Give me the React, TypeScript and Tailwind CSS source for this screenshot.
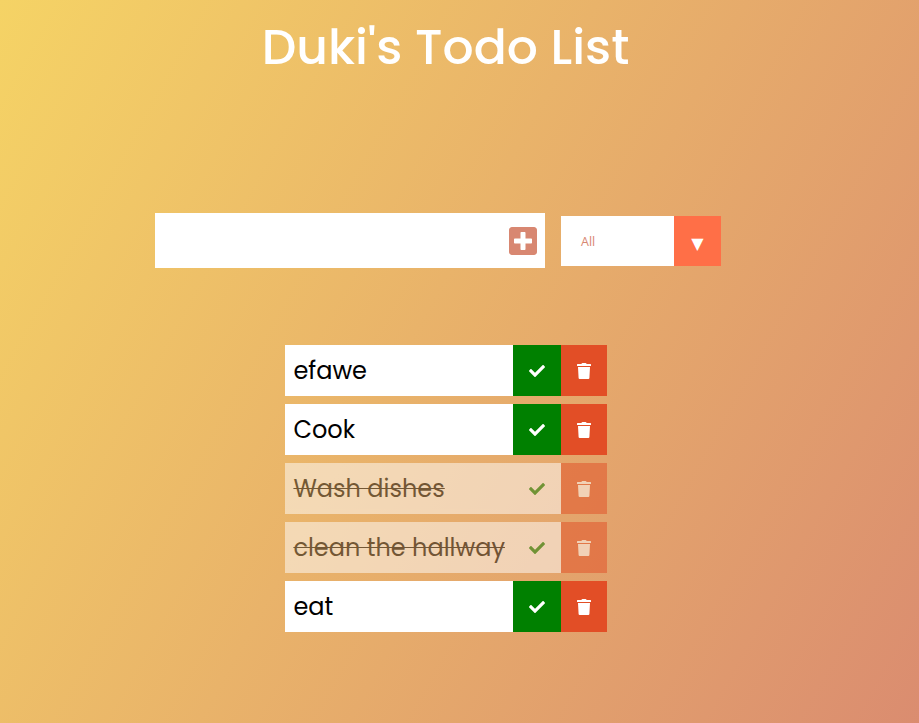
import React from "react";
import { FaCheck, FaPlusSquare } from "react-icons/fa";

type Todo = { text: string; done: boolean };

const todos: Todo[] = [
  { text: "efawe", done: false },
  { text: "Cook", done: false },
  { text: "Wash dishes", done: true },
  { text: "clean the hallway", done: true },
  { text: "eat", done: false },
];

function TrashIcon() {
  return (
    <svg viewBox="0 0 14 16" className="h-4 w-[14px]" fill="currentColor" aria-hidden="true">
      <path d="M.4 1h3.8l.5-.6Q5 0 5.4 0h3.2q.4 0 .7.4l.5.6h3.8q.4 0 .4.4V3H0V1.400q0-.4.4-.4zM1 4h12l-.6 11q-.1 1-1 1H2.600q-.9 0-1-1z" />
    </svg>
  );
}

function TodoItem({ todo }: { todo: Todo }) {
  return (
    <li className={`flex h-[51px] bg-white text-[24px] text-black ${todo.done ? "opacity-50" : ""}`}>
      <span className={`flex-1 pl-[8.4px] leading-[51px] ${todo.done ? "line-through decoration-1" : ""}`}>{todo.text}</span>
      <button
        aria-label="Complete"
        className={`flex w-12 items-center justify-center ${todo.done ? "bg-white text-[#008000]" : "bg-[#008000] text-white"}`}
      >
        <FaCheck className="size-4" />
      </button>
      <button aria-label="Delete" className="flex w-[46px] items-center justify-center bg-[#e24e26] text-white">
        <TrashIcon />
      </button>
    </li>
  );
}

export default function App() {
  return (
    <div className="flow-root h-[723px] w-[919px] overflow-hidden bg-[linear-gradient(119deg,#f5d365,#da8b70_102%)] font-['Poppins','Open_Sans',sans-serif]">
      <header className="flex h-[93px] items-center justify-center pt-[3px] pr-[28px] text-[48.8px] font-medium text-white">
        <h1>Duki's Todo List</h1>
      </header>
      <form className="mt-[120px] ml-[155px] flex items-center gap-4">
        <div className="flex h-[55px] w-[390px] items-center justify-end bg-white pr-[6px]">
          <FaPlusSquare className="h-[32px] w-[32px] text-[#d88771]" />
        </div>
        <div className="flex h-[50px] w-[160px] bg-white text-[#d88771]">
          <span className="flex flex-1 items-center pt-[3px] pl-5 font-['Open_Sans',sans-serif] text-[12.5px]">All</span>
          <span className="flex w-[47px] items-center justify-center bg-[#ff6f47] pt-[6px] font-['DejaVu_Sans',sans-serif] text-[16px] text-white">▼</span>
        </div>
      </form>
      <ul className="mt-[77px] ml-[285px] flex w-[322px] flex-col gap-2">
        {todos.map((t) => (
          <TodoItem key={t.text} todo={t} />
        ))}
      </ul>
    </div>
  );
}
